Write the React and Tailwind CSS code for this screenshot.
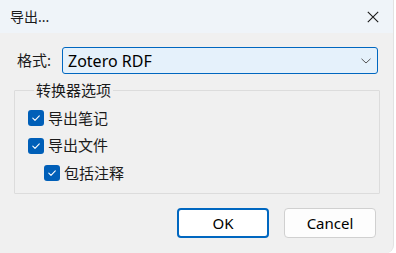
import React from "react";

const cjk = { fontFamily: '"Segoe UI", "Noto Sans", "Noto Sans CJK SC", sans-serif' };

function Check({ label, indent }) {
  return (
    <div className={`flex items-center h-[16px] ${indent ? "pl-[16px]" : ""}`}>
      <span className="w-[16px] h-[16px] rounded-[3px] bg-[#005fb8] flex items-center justify-center shrink-0">
        <svg width="10" height="10" viewBox="0 0 10 10" fill="none">
          <path d="M1.8 5.2 L4 7.3 L8.3 2.8" stroke="white" strokeWidth="1.1" strokeLinecap="round" strokeLinejoin="round" />
        </svg>
      </span>
      <span className="ml-[4px] text-[15px] leading-none text-[#1a1a1a]">{label}</span>
    </div>
  );
}

export default function App() {
  return (
    <div className="w-[396px] h-[253px] bg-white" style={cjk}>
      <div className="w-[394px] h-[253px] bg-[#f0f0f0] rounded-br-[8px] flex flex-col border-r border-[#e2e2e2]">
        <div className="h-[33px] bg-[#eff4f9] flex items-center justify-between pl-[10px] pr-[14px]">
          <span className="text-[14px] text-[#1a1a1a] leading-none">导出...</span>
          <svg width="12" height="12" viewBox="0 0 12 12" fill="none">
            <path d="M0.8 0.8 L11.2 11.2 M11.2 0.8 L0.8 11.2" stroke="#1a1a1a" strokeWidth="1.1" />
          </svg>
        </div>
        <div className="flex items-center mt-[14px] pl-[17px]">
          <span className="w-[45px] text-[15px] leading-none text-[#1a1a1a]">格式:</span>
          <div className="w-[316px] h-[27px] border border-[#0067c0] rounded-[3px] bg-[#e5f1fb] flex items-center justify-between pl-[5px] pr-[5px]">
            <span className="text-[16px] leading-none text-black">Zotero RDF</span>
            <svg width="12" height="8" viewBox="0 0 12 8" fill="none">
              <path d="M1.5 1.8 L6 6 L10.5 1.8" stroke="#555" strokeWidth="1" />
            </svg>
          </div>
        </div>
        <fieldset className="ml-[14px] mt-[7px] w-[366px] h-[113px] border border-[#dcdcdc] pl-[13px] pt-[11px] flex flex-col gap-[11.5px] rounded-[1px]">
          <legend className="ml-[6px] px-[2px] text-[15px] leading-[18px] text-[#1a1a1a]">转换器选项</legend>
          <Check label="导出笔记" />
          <Check label="导出文件" />
          <Check label="包括注释" indent />
        </fieldset>
        <div className="flex justify-end gap-[15px] mt-[14px] pr-[17px]">
          <button className="w-[92px] h-[30px] rounded-[4px] border-2 border-[#0067c0] bg-white text-[15px] text-black">OK</button>
          <button className="w-[92px] h-[30px] rounded-[4px] border border-[#d0d0d0] bg-[#fdfdfd] text-[15px] text-black">Cancel</button>
        </div>
      </div>
    </div>
  );
}
